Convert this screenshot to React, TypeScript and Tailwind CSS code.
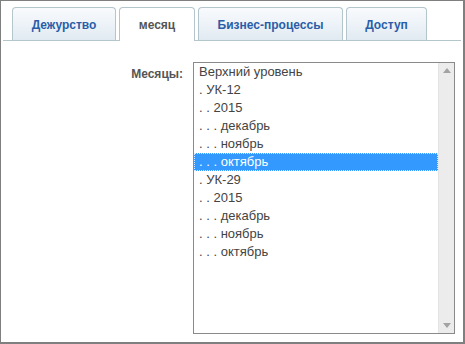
import React from "react";

const tabs = [
  { label: "Дежурство", w: "w-[104px]", active: false },
  { label: "месяц", w: "w-[76px]", active: true },
  { label: "Бизнес-процессы", w: "w-[145px]", active: false },
  { label: "Доступ", w: "w-[81px]", active: false },
];

const items = [
  "Верхний уровень",
  ". УК-12",
  ". . 2015",
  ". . . декабрь",
  ". . . ноябрь",
  ". . . октябрь",
  ". УК-29",
  ". . 2015",
  ". . . декабрь",
  ". . . ноябрь",
  ". . . октябрь",
];

export default function App() {
  return (
    <div
      className="w-[465px] h-[344px] bg-white border-t border-l border-r-2 border-b-2 border-[#7f7f7f] flex flex-col"
      style={{ fontFamily: '"Liberation Sans", Arial, sans-serif' }}
    >
      <div className="mt-[7px] mx-[2px] h-[33px] border-b border-[#b3c6cc] flex items-end pl-[9px] gap-[3px]">
        {tabs.map((t) => (
          <div
            key={t.label}
            className={
              t.active
                ? `${t.w} h-[34px] -mb-[1px] bg-white border border-b-0 border-[#b3c6cc] rounded-t-[4px] flex items-center justify-center text-[12px] font-bold text-[#555555] pt-[1px]`
                : `${t.w} h-[33px] bg-gradient-to-b from-[#f9fbfd] to-[#e1eaf2] border border-b-0 border-[#b3c6cc] rounded-t-[4px] flex items-center justify-center text-[12px] font-bold text-[#2a5da8] pt-[2px]`
            }
          >
            {t.label}
          </div>
        ))}
      </div>
      <div className="flex pt-[21px]">
        <div className="w-[183px] pr-[1px] text-right text-[12px] font-bold text-[#555555] pt-[3px]">
          Месяцы:
        </div>
        <div className="ml-[9px] w-[262px] h-[272px] border border-[#8a8a8a] flex">
          <div className="flex-1 flex flex-col">
            {items.map((it, i) => (
              <div
                key={i}
                className={
                  i === 5
                    ? "h-[18px] leading-[18px] pl-[5px] text-[13px] text-white bg-[#3399ff] outline-1 outline-dotted outline-[#dbe9ff] -outline-offset-1"
                    : "h-[18px] leading-[18px] pl-[5px] text-[13px] text-[#444444]"
                }
              >
                {it}
              </div>
            ))}
          </div>
          <div className="w-[16px] bg-[#ececec] border-l border-[#e4e4e4] flex flex-col justify-between items-center py-[5px]">
            <svg width="8" height="5" viewBox="0 0 8 5">
              <path d="M0 5 L4 0 L8 5 Z" fill="#a3a3a3" />
            </svg>
            <svg width="8" height="5" viewBox="0 0 8 5">
              <path d="M0 0 L4 5 L8 0 Z" fill="#a3a3a3" />
            </svg>
          </div>
        </div>
      </div>
    </div>
  );
}
